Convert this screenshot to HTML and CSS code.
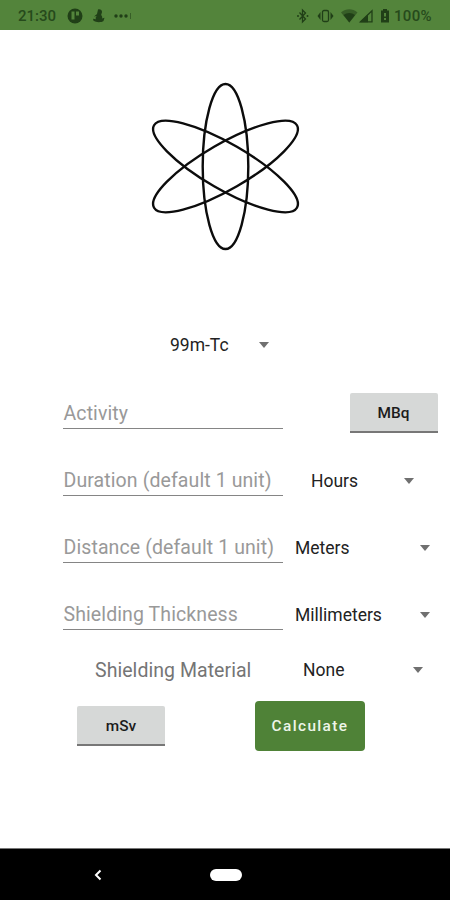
FILE: index.html
```html
<!DOCTYPE html>
<html lang="en">
<head>
<meta charset="utf-8">
<meta name="viewport" content="width=device-width, initial-scale=1">
<title>Dose calculator</title>
<link rel="stylesheet" href="styles.css">
</head>
<body>
<header class="status">
  <span class="clock">21:30</span>
  <svg class="notices" width="68" height="18" viewBox="0 0 68 18">
    <circle cx="8" cy="9" r="7.500"/>
    <path class="cut" d="M4.500 4.500h3v8h-3zM9 4.500h3v4H9z"/>
    <path d="M31 2.500c2-.8 4 .4 4 2.300 0 1.500-.8 2-.8 3.200 1 1.200 1.300 2.500.8 3.500l2.500-.8-1 3.300c-2 1.600-7.500 1.600-10-.2l-.5-2 3 .4c-.8-1.200-.2-2.500.8-3.200l-2.800.4L30 7z"/>
    <circle cx="49" cy="9" r="1.700"/><circle cx="54" cy="9" r="1.700"/><circle cx="59" cy="9" r="1.700"/>
    <path class="faint" d="M63 6h1v6h-1z"/>
  </svg>
  <svg class="signals" width="94" height="18" viewBox="0 0 94 18">
    <path class="line" d="M2.500 5.500l6 6.500-3 3V3l3 3-6 6.500"/>
    <circle cx="1" cy="9" r="1"/><circle cx="10.500" cy="9" r="1"/>
    <rect class="line" x="25.500" y="3.500" width="6" height="11" rx="1.500"/>
    <path d="M23.500 5v8l-3-4zM33.500 5v8l3-4z"/>
    <path class="faint" d="M44 5.500c5-4.200 11.500-4.200 16.500 0l-8.200 10z"/>
    <path d="M46.500 8c3.500-2.700 8-2.700 11.500 0l-5.700 7.500z"/>
    <path class="line" d="M63.500 14.800L75 3.800v11z"/><path d="M63 15.300l8-7.800v7.800z"/>
    <path d="M86 2h4v1.500h2v12h-8v-12h2z"/>
    <path class="cut" d="M87 6h2v3.500h-2zM87 11h2v2h-2z"/>
  </svg>
  <span class="charge">100%</span>
</header>
<main>
  <svg class="atom" width="152" height="172" viewBox="-76.500 -86.500 152 172">
    <ellipse rx="22.800" ry="82.500"/>
    <ellipse rx="22.800" ry="82.500" transform="rotate(60)"/>
    <ellipse rx="22.800" ry="82.500" transform="rotate(-60)"/>
  </svg>
  <div class="select isotope"><span>99m-Tc</span><i class="caret"></i></div>
  <div class="row">
    <div class="field"><span class="hint">Activity</span></div>
    <button class="toggle unit">MBq</button>
  </div>
  <div class="row">
    <div class="field"><span class="hint">Duration (default 1 unit)</span></div>
    <div class="select hours"><span>Hours</span><i class="caret"></i></div>
  </div>
  <div class="row">
    <div class="field"><span class="hint">Distance (default 1 unit)</span></div>
    <div class="select length"><span>Meters</span><i class="caret"></i></div>
  </div>
  <div class="row">
    <div class="field"><span class="hint">Shielding Thickness</span></div>
    <div class="select length"><span>Millimeters</span><i class="caret"></i></div>
  </div>
  <div class="material">
    <span class="label">Shielding Material</span>
    <div class="select"><span>None</span><i class="caret"></i></div>
  </div>
  <div class="actions">
    <button class="toggle">mSv</button>
    <button class="calculate">Calculate</button>
  </div>
</main>
<nav class="navbar">
  <svg width="8" height="12" viewBox="0 0 8 12"><path d="M6.500 1.500L2 6l4.500 4.500"/></svg>
  <span class="home"></span>
</nav>
</body>
</html>
```
FILE: styles.css
```css
* { box-sizing: border-box; }
body {
  margin: 0;
  height: 900px;
  display: flex;
  flex-direction: column;
  background: #fff;
  font-family: Roboto, "Liberation Sans", sans-serif;
  color: #222;
  overflow: hidden;
}
.status {
  height: 30px;
  padding: 2px 16px 0 18px;
  display: flex;
  align-items: center;
  background: #53843b;
  color: #264a1b;
  font-size: 15px;
  font-weight: 500;
}
.status svg { fill: #203f17; }
.clock { width: 49px; }
.signals { margin-left: auto; margin-right: 3px; }
.status .cut { fill: #53843b; }
.status .faint { opacity: .55; }
.status .line { fill: none; stroke: #203f17; stroke-width: 1.3; }
.charge { width: 40px; letter-spacing: .3px; white-space: nowrap; }
main {
  flex: 1;
  display: flex;
  flex-direction: column;
}
.atom {
  margin: 50px 0 0 149px;
  fill: none;
  stroke: #0c0c0c;
  stroke-width: 2.4;
}
.select {
  display: flex;
  align-items: center;
  justify-content: space-between;
  font-size: 17.500px;
}
.caret {
  border: solid transparent;
  border-width: 6px 5.500px 0;
  border-top-color: #707070;
}
.isotope { margin: 72px 0 0 170px; width: 99px; height: 42px; }
.row {
  height: 67px;
  padding-left: 63px;
  display: flex;
  align-items: center;
}
.isotope + .row { margin-top: 14px; }
.field {
  width: 220px;
  height: 31px;
  padding: 3px 0 0 .5px;
  border-bottom: 1px solid #858585;
  line-height: 26px;
  white-space: nowrap;
}
.hint { font-size: 19.500px; letter-spacing: .1px; color: #999; }
.toggle {
  width: 88px;
  height: 40px;
  padding: 2px 0 0;
  border: 0;
  border-bottom: 2px solid #777;
  border-radius: 2px 2px 0 0;
  background: #d6d8d7;
  color: #1c1c1c;
  font: 500 15.400px Roboto, sans-serif;
}
.unit { margin-left: 66.500px; margin-top: -1px; }
.hours { margin-left: 28px; width: 103px; }
.length { margin-left: 12px; width: 135px; }
.material {
  height: 44px;
  padding-left: 95px;
  display: flex;
  align-items: center;
}
.label { width: 208px; font-size: 19.500px; letter-spacing: .05px; color: #757575; }
.material .select { width: 120px; }
.actions {
  height: 68px;
  padding-left: 77px;
  display: flex;
  align-items: center;
}
.calculate {
  width: 110px;
  height: 50px;
  margin-left: 90px;
  padding: 0;
  border: 0;
  border-radius: 4px;
  background: #4f8237;
  color: #eef5e9;
  font: 500 15.400px Roboto, sans-serif;
  letter-spacing: 1.370px;
}
.navbar {
  height: 52px;
  padding-left: 93.500px;
  border-top: 1px solid #777;
  display: flex;
  align-items: center;
  background: #000;
}
.navbar svg { fill: none; stroke: #fff; stroke-width: 2; }
.home {
  width: 32px;
  height: 12px;
  margin-left: 108.500px;
  border-radius: 6px;
  background: #fff;
}
```
